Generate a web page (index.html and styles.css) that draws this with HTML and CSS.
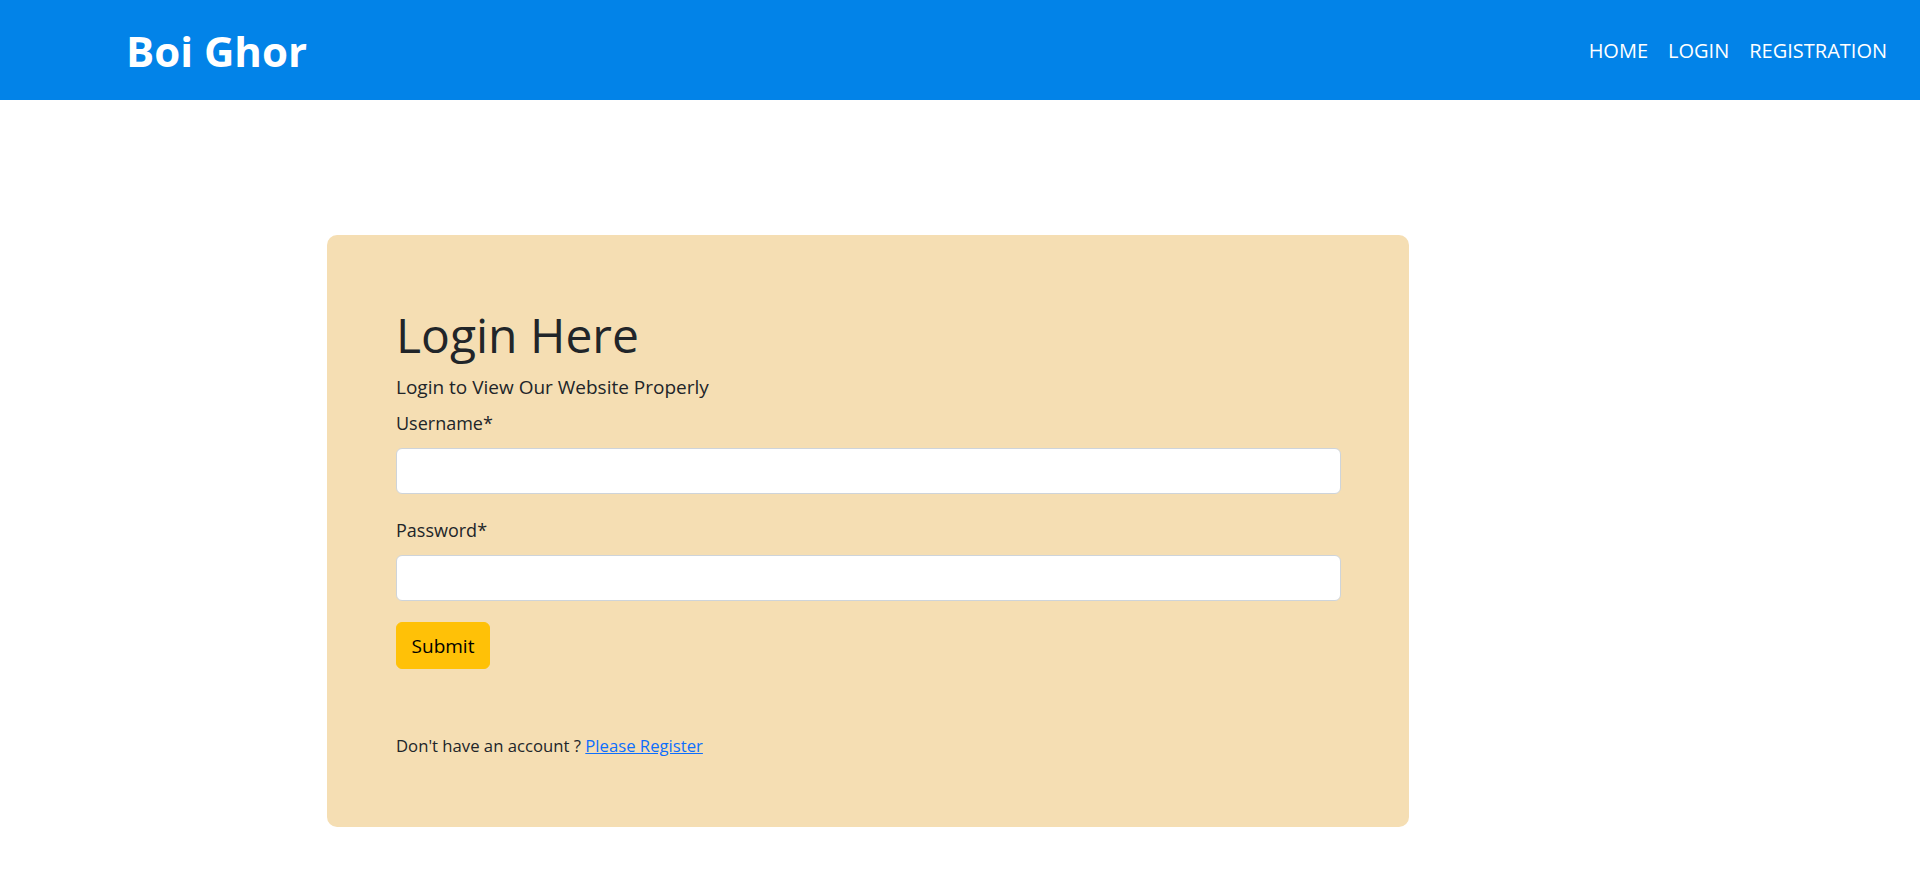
FILE: index.html
```html
<!DOCTYPE html>
<html lang="en">
<head>
<meta charset="utf-8">
<title>Boi Ghor - Login</title>
<link rel="stylesheet" href="styles.css">
</head>
<body>
<header class="navbar">
  <a class="brand" href="#">Boi Ghor</a>
  <nav class="nav-links">
    <a href="#">HOME</a>
    <a href="#">LOGIN</a>
    <a href="#">REGISTRATION</a>
  </nav>
</header>
<main class="page">
  <section class="card">
    <h1 class="title">Login Here</h1>
    <p class="lead">Login to View Our Website Properly</p>
    <form class="form">
      <label class="label" for="username">Username*</label>
      <input class="input" id="username" type="text">
      <label class="label label-gap" for="password">Password*</label>
      <input class="input" id="password" type="password">
      <button class="btn" type="button">Submit</button>
    </form>
    <p class="signup">Don't have an account ? <a href="#">Please Register</a></p>
  </section>
</main>
</body>
</html>
```
FILE: styles.css
```css
* { box-sizing: border-box; }
html, body { margin: 0; padding: 0; }
body {
  font-family: "Open Sans", "Noto Sans", sans-serif;
  color: #212529;
  background: #fff;
}
.navbar {
  height: 100px;
  background: #0283e8;
  display: flex;
  align-items: center;
  justify-content: space-between;
  padding: 0 33px 0 126px;
}
.brand {
  color: #fff;
  font-weight: 700;
  font-size: 42px;
  text-decoration: none;
}
.nav-links {
  display: flex;
  gap: 20px;
}
.nav-links a {
  color: #fff;
  text-decoration: none;
  font-size: 20px;
}
.page {
  padding: 135px 0 40px 327px;
}
.card {
  width: 1082px;
  background: #f5deb3;
  border-radius: 10px;
  padding: 71px 68px 69px 69px;
}
.title {
  margin: 0 0 9px;
  font-size: 48px;
  font-weight: 400;
  line-height: 1.2;
}
.lead {
  margin: 0 0 9px;
  font-size: 19px;
  line-height: 1.5;
}
.form {
  display: flex;
  flex-direction: column;
  align-items: stretch;
}
.label {
  font-size: 18px;
  line-height: 1.5;
  margin-bottom: 11px;
}
.label-gap { margin-top: 23px; }
.input {
  height: 46px;
  border: 1px solid #ced4da;
  border-radius: 6px;
  background: #fff;
  font-size: 18px;
  padding: 6px 12px;
}
.btn {
  align-self: flex-start;
  margin-top: 21px;
  height: 47px;
  width: 94px;
  background: #ffc107;
  border: 1px solid #ffc107;
  border-radius: 6px;
  color: #000;
  font-family: inherit;
  font-size: 19px;
  padding: 1px 0 0;
}
.signup {
  margin: 64px 0 0;
  font-size: 16.7px;
  line-height: 1.5;
}
.signup a { color: #0d6efd; }
```
